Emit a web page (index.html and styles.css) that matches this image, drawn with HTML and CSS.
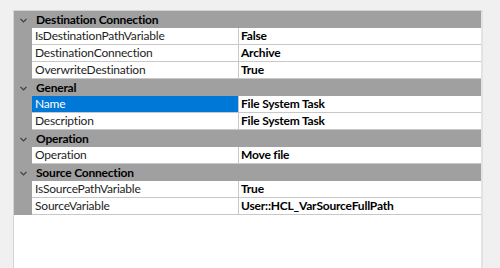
FILE: index.html
```html
<!DOCTYPE html>
<html lang="en">
<head>
  <meta charset="UTF-8">
  <title>Properties</title>
  <link rel="stylesheet" href="styles.css">
</head>
<body>
  <div class="grid">
    <div class="category">
      <span class="toggle"><svg width="7" height="5" viewBox="0 0 7 5"><path d="M0.5 0.8 L3.5 3.8 L6.5 0.8" fill="none" stroke="#3c3c3c" stroke-width="1.2"/></svg></span>
      <span class="category-name">Destination Connection</span>
    </div>
    <div class="prop">
      <span class="gutter"></span>
      <span class="name">IsDestinationPathVariable</span>
      <span class="value">False</span>
    </div>
    <div class="prop">
      <span class="gutter"></span>
      <span class="name">DestinationConnection</span>
      <span class="value">Archive</span>
    </div>
    <div class="prop">
      <span class="gutter"></span>
      <span class="name">OverwriteDestination</span>
      <span class="value">True</span>
    </div>

    <div class="category">
      <span class="toggle"><svg width="7" height="5" viewBox="0 0 7 5"><path d="M0.5 0.8 L3.5 3.8 L6.5 0.8" fill="none" stroke="#3c3c3c" stroke-width="1.2"/></svg></span>
      <span class="category-name">General</span>
    </div>
    <div class="prop">
      <span class="gutter"></span>
      <span class="name selected">Name</span>
      <span class="value">File System Task</span>
    </div>
    <div class="prop">
      <span class="gutter"></span>
      <span class="name">Description</span>
      <span class="value">File System Task</span>
    </div>

    <div class="category">
      <span class="toggle"><svg width="7" height="5" viewBox="0 0 7 5"><path d="M0.5 0.8 L3.5 3.8 L6.5 0.8" fill="none" stroke="#3c3c3c" stroke-width="1.2"/></svg></span>
      <span class="category-name">Operation</span>
    </div>
    <div class="prop">
      <span class="gutter"></span>
      <span class="name">Operation</span>
      <span class="value">Move file</span>
    </div>

    <div class="category">
      <span class="toggle"><svg width="7" height="5" viewBox="0 0 7 5"><path d="M0.5 0.8 L3.5 3.8 L6.5 0.8" fill="none" stroke="#3c3c3c" stroke-width="1.2"/></svg></span>
      <span class="category-name">Source Connection</span>
    </div>
    <div class="prop">
      <span class="gutter"></span>
      <span class="name">IsSourcePathVariable</span>
      <span class="value">True</span>
    </div>
    <div class="prop">
      <span class="gutter"></span>
      <span class="name">SourceVariable</span>
      <span class="value">User::HCL_VarSourceFullPath</span>
    </div>
  </div>
</body>
</html>
```

FILE: styles.css
```css
body {
  margin: 0;
  background-color: #f0f0f0;
  font-family: Lato, "Open Sans", sans-serif;
  font-size: 12px;
  letter-spacing: -0.2px;
  color: #000000;
  overflow: hidden;
}

.grid {
  margin: 10px 0 0 13px;
  width: 467px;
  height: 257px;
  background-color: #ffffff;
  border: 1px solid #d4d4d4;
  border-right: 2px solid #e3e3e3;
  border-bottom: none;
}

.category {
  display: flex;
  align-items: center;
  height: 17px;
  background-color: #a0a0a0;
}

.toggle {
  width: 18px;
  display: flex;
  justify-content: center;
  padding-top: 1px;
}

.category-name {
  font-weight: bold;
  padding-left: 4px;
}

.prop {
  display: flex;
  height: 17px;
}

.gutter {
  width: 18px;
  flex-shrink: 0;
  background-color: #a0a0a0;
}

.name,
.value {
  height: 16px;
  line-height: 16px;
  border-bottom: 1px solid #c8c8c8;
  white-space: nowrap;
  overflow: hidden;
}

.name {
  width: 203px;
  flex-shrink: 0;
  padding-left: 3px;
  border-right: 1px solid #c8c8c8;
  color: #1e1e1e;
}

.name.selected {
  background-color: #0078d7;
  color: #ffffff;
}

.value {
  flex: 1;
  padding-left: 2px;
  font-weight: bold;
}
```
